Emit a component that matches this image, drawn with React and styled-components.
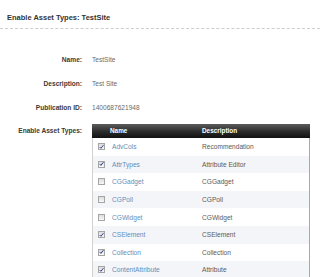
import React from 'react';
import styled, { createGlobalStyle } from 'styled-components';

const GlobalStyle = createGlobalStyle`
    body {
        margin: 0;
        background: #fff;
        font-family: "Liberation Sans", Arial, sans-serif;
    }
`

const Page = styled.div`
    width: 320px;
    height: 277px;
    overflow: hidden;
`

const Title = styled.h1`
    margin: 0;
    padding: 13px 7px 0;
    font-size: 7.5px;
    line-height: 9px;
    font-weight: bold;
    color: #333;
    padding-bottom: 6px;
    border-bottom: 1px dashed #cdcdcd;
`

const Form = styled.div`
    display: grid;
    grid-template-columns: 82px 218px;
    grid-auto-rows: 24px;
    column-gap: 10px;
    padding-top: 18px;
`

const Label = styled.div`
    text-align: right;
    font-size: 6.6px;
    font-weight: bold;
    color: #3a3a3a;
    display: flex;
    align-items: center;
    justify-content: flex-end;
    ${p => p.$top && `
        align-items: flex-start;
        line-height: 14px;
        margin-top: 5px;
    `}
`

const Value = styled.div`
    font-size: 6.6px;
    color: #6a6a6a;
    display: flex;
    align-items: center;
`

const Table = styled.div`
    margin-top: 5px;
    width: 218px;
`

const HeadRow = styled.div`
    display: grid;
    grid-template-columns: 103px 1fr;
    height: 14px;
    background: linear-gradient(#5c5c5c, #2a2a2a 55%, #111);
    color: #fff;
    font-size: 6.4px;
    font-weight: bold;
    line-height: 14px;
`

const HeadCell = styled.div`
    padding-left: ${p => p.$pad}px;
`

const Body = styled.div`
    border-left: 1px solid #d2d2d2;
    border-right: 1px solid #a8a8a8;
`

const Row = styled.div`
    display: grid;
    grid-template-columns: 102px 1fr;
    height: 17.6px;
    align-items: center;
    background: ${p => (p.$alt ? '#f3f5f8' : '#fff')};
    font-size: 6.6px;
`

const NameCell = styled.div`
    display: flex;
    align-items: center;
    gap: 7px;
    padding-left: 5px;
`

const Box = styled.span`
    width: 5px;
    height: 5px;
    border: 1px solid #a5a5a5;
    background: linear-gradient(#dcdcdc, #f8f8f8);
    display: flex;
    align-items: center;
    justify-content: center;
`

const Link = styled.span`
    color: #5e8fba;
`

const Desc = styled.div`
    padding-left: 7px;
    color: #5a5a5a;
`

const rows = [
    ['AdvCols', 'Recommendation', true],
    ['AttrTypes', 'Attribute Editor', true],
    ['CGGadget', 'CGGadget', false],
    ['CGPoll', 'CGPoll', false],
    ['CGWidget', 'CGWidget', false],
    ['CSElement', 'CSElement', true],
    ['Collection', 'Collection', true],
    ['ContentAttribute', 'Attribute', true],
]

const Check = () => (
    <svg width="6" height="6" viewBox="0 0 6 6">
        <path d="M0.8 3 L2.3 4.6 L5.3 0.8" fill="none" stroke="#2b3f8c" strokeWidth="1.2" />
    </svg>
)

const App = () => {
    return (
        <Page>
            <GlobalStyle />
            <Title>Enable Asset Types: TestSite</Title>
            <Form>
                <Label>Name:</Label>
                <Value>TestSite</Value>
                <Label>Description:</Label>
                <Value>Test Site</Value>
                <Label>Publication ID:</Label>
                <Value>1400687621948</Value>
                <Label $top>Enable Asset Types:</Label>
                <Table>
                    <HeadRow>
                        <HeadCell $pad={18}>Name</HeadCell>
                        <HeadCell $pad={7}>Description</HeadCell>
                    </HeadRow>
                    <Body>
                        {rows.map(([name, desc, checked], i) => (
                            <Row key={name} $alt={i % 2 === 1}>
                                <NameCell>
                                    <Box>{checked && <Check />}</Box>
                                    <Link>{name}</Link>
                                </NameCell>
                                <Desc>{desc}</Desc>
                            </Row>
                        ))}
                    </Body>
                </Table>
            </Form>
        </Page>
    )
}

export default App;
